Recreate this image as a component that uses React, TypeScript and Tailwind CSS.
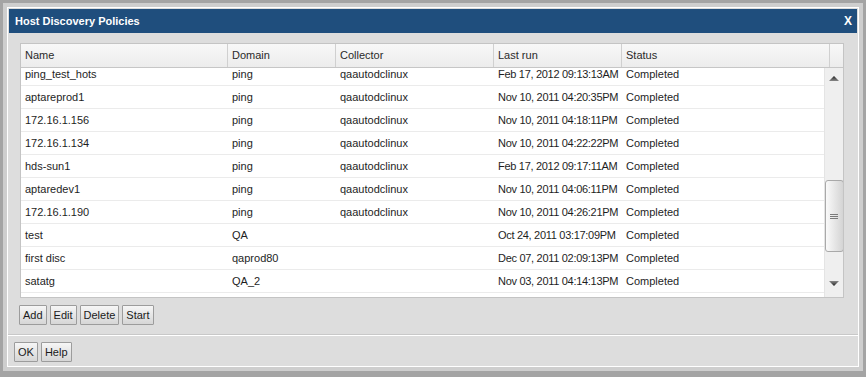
import React from 'react';

interface Policy {
  name: string;
  domain: string;
  collector: string;
  lastRun: string;
  status: string;
}

const rows: Policy[] = [
  { name: 'ping_test_hots', domain: 'ping', collector: 'qaautodclinux', lastRun: 'Feb 17, 2012 09:13:13AM', status: 'Completed' },
  { name: 'aptareprod1', domain: 'ping', collector: 'qaautodclinux', lastRun: 'Nov 10, 2011 04:20:35PM', status: 'Completed' },
  { name: '172.16.1.156', domain: 'ping', collector: 'qaautodclinux', lastRun: 'Nov 10, 2011 04:18:11PM', status: 'Completed' },
  { name: '172.16.1.134', domain: 'ping', collector: 'qaautodclinux', lastRun: 'Nov 10, 2011 04:22:22PM', status: 'Completed' },
  { name: 'hds-sun1', domain: 'ping', collector: 'qaautodclinux', lastRun: 'Feb 17, 2012 09:17:11AM', status: 'Completed' },
  { name: 'aptaredev1', domain: 'ping', collector: 'qaautodclinux', lastRun: 'Nov 10, 2011 04:06:11PM', status: 'Completed' },
  { name: '172.16.1.190', domain: 'ping', collector: 'qaautodclinux', lastRun: 'Nov 10, 2011 04:26:21PM', status: 'Completed' },
  { name: 'test', domain: 'QA', collector: '', lastRun: 'Oct 24, 2011 03:17:09PM', status: 'Completed' },
  { name: 'first disc', domain: 'qaprod80', collector: '', lastRun: 'Dec 07, 2011 02:09:13PM', status: 'Completed' },
  { name: 'satatg', domain: 'QA_2', collector: '', lastRun: 'Nov 03, 2011 04:14:13PM', status: 'Completed' },
];

function Btn({ children }: { children: React.ReactNode }) {
  return (
    <button className="h-[20px] px-[3px] border border-[#9c9c9c] rounded-[1px] bg-gradient-to-b from-[#f6f6f6] to-[#d6d6d6] text-[11px] text-[#1a1a1a] leading-none">
      {children}
    </button>
  );
}

export default function App() {
  return (
    <div
      className="w-[866px] h-[377px] bg-[#a4a4a4] pt-[3px] pl-[3px] pr-[3px] pb-[6px]"
      style={{ fontFamily: '"Liberation Sans", Arial, sans-serif' }}
    >
      <div className="h-full bg-[#cecece] p-[4px]">
        <div className="h-full border border-white bg-[#dddddd] flex flex-col">
          {/* title bar */}
          <div className="mx-[1px] mt-[1px] h-[24px] bg-[#1f4e7d] flex items-center justify-between pl-[6px] pr-[5px] text-white text-[11px] font-bold">
            <span>Host Discovery Policies</span>
            <span className="text-[12px]">X</span>
          </div>

          <div className="pl-[12px] pt-[10px]">
            {/* table */}
            <div className="w-[824px] h-[255px] border border-[#c4c4c4] bg-white flex flex-col text-[11px] text-[#1e1e1e]">
              <div className="h-[24px] flex border-b border-[#c6c6c6] bg-gradient-to-b from-[#f8f8f8] to-[#ececec] text-[#2a2a2a]">
                <div className="w-[207px] pl-[4px] flex items-center border-r border-[#d0d0d0]">Name</div>
                <div className="w-[108px] pl-[4px] flex items-center border-r border-[#d0d0d0]">Domain</div>
                <div className="w-[158px] pl-[4px] flex items-center border-r border-[#d0d0d0]">Collector</div>
                <div className="w-[128px] pl-[4px] flex items-center border-r border-[#d0d0d0]">Last run</div>
                <div className="w-[208px] pl-[4px] flex items-center border-r border-[#d0d0d0]">Status</div>
                <div className="flex-1" />
              </div>

              <div className="flex flex-1 overflow-hidden">
                <div className="flex-1 overflow-hidden">
                  <div className="-mt-[5px]">
                    {rows.map((r) => (
                      <div key={r.name} className="h-[23px] flex items-center border-b border-[#ebebeb] whitespace-nowrap">
                        <div className="w-[207px] pl-[4px]">{r.name}</div>
                        <div className="w-[108px] pl-[4px]">{r.domain}</div>
                        <div className="w-[158px] pl-[4px]">{r.collector}</div>
                        <div className="w-[128px] pl-[4px] tracking-[-0.3px] overflow-hidden">{r.lastRun}</div>
                        <div className="flex-1 pl-[4px]">{r.status}</div>
                      </div>
                    ))}
                    <div className="h-[23px]" />
                  </div>
                </div>

                {/* scrollbar */}
                <div className="w-[19px] bg-[#efefef] border-l border-[#e4e4e4] flex flex-col items-center">
                  <svg width="10" height="6" viewBox="0 0 10 6" className="mt-[8px]">
                    <defs>
                      <linearGradient id="ua" x1="0" y1="0" x2="0" y2="1">
                        <stop offset="0" stopColor="#222" />
                        <stop offset="1" stopColor="#888" />
                      </linearGradient>
                    </defs>
                    <polygon points="5,0 10,5 0,5" fill="url(#ua)" />
                  </svg>
                  <div className="mt-[98px] w-[19px] h-[72px] rounded-[3px] border border-[#a9a9a9] bg-gradient-to-r from-[#fafafa] to-[#d4d4d4] flex flex-col items-center justify-center gap-[1px]">
                    <div className="w-[8px] h-[1px] bg-[#7a7a7a]" />
                    <div className="w-[8px] h-[1px] bg-[#7a7a7a]" />
                    <div className="w-[8px] h-[1px] bg-[#7a7a7a]" />
                  </div>
                  <svg width="10" height="6" viewBox="0 0 10 6" className="mt-[29px]">
                    <defs>
                      <linearGradient id="da" x1="0" y1="0" x2="0" y2="1">
                        <stop offset="0" stopColor="#888" />
                        <stop offset="1" stopColor="#222" />
                      </linearGradient>
                    </defs>
                    <polygon points="0,0 10,0 5,5" fill="url(#da)" />
                  </svg>
                </div>
              </div>
            </div>

            <div className="flex gap-[3px] mt-[7px] -ml-[1px]">
              <Btn>Add</Btn>
              <Btn>Edit</Btn>
              <Btn>Delete</Btn>
              <Btn>Start</Btn>
            </div>
          </div>

          <div className="mt-[9px] border-t border-[#c8c8c8]">
            <div className="border-t border-white flex gap-[3px] pl-[6px] pt-[6px]">
              <Btn>OK</Btn>
              <Btn>Help</Btn>
            </div>
          </div>
        </div>
      </div>
    </div>
  );
}
